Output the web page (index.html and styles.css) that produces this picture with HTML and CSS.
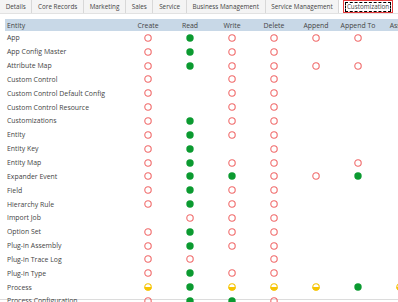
FILE: index.html
```html
<!DOCTYPE html>
<html>
<head>
<meta charset="utf-8">
<link rel="stylesheet" href="styles.css">
</head>
<body>
<div class="frame">
  <div class="tabs">
    <div class="tab">Details</div>
    <div class="tab">Core Records</div>
    <div class="tab">Marketing</div>
    <div class="tab">Sales</div>
    <div class="tab">Service</div>
    <div class="tab">Business Management</div>
    <div class="tab">Service Management</div>
    <div class="tab tab-active"><span class="focus">Customization</span></div>
  </div>
  <div class="grid" id="grid">
    <div class="row head">
      <div class="name">Entity</div>
      <div class="cell">Create</div>
      <div class="cell">Read</div>
      <div class="cell">Write</div>
      <div class="cell">Delete</div>
      <div class="cell">Append</div>
      <div class="cell">Append To</div>
      <div class="cell">Assign</div>
    </div>
  </div>
</div>
<script src="app.js"></script>
</body>
</html>
```
FILE: styles.css
```css
html, body { margin: 0; padding: 0; background: #fff; }
body {
  width: 398px; height: 302px; overflow: hidden;
  font-family: "Open Sans", "Noto Sans", sans-serif;
  font-size: 6.9px; color: #444;
}
.frame { height: 299px; border-bottom: 1px solid #dcdcdc; }
.tabs {
  display: flex; height: 13px; align-items: stretch;
  border-bottom: 1px solid #e2e2e2; background: #fff;
  font-size: 6.3px;
}
.tab {
  display: flex; align-items: center; padding: 0 5.7px;
  background: #f4f4f4; border-right: 1px solid #d8d8d8; color: #444;
  white-space: nowrap;
}
.tab-active {
  margin-left: 4px; padding: 0 1px; background: #fff;
  border: 1px solid #e53b3b; height: 11px; align-self: flex-start;
}
.focus { border: 1px dashed #000; padding: 0 0.5px; line-height: 8px; }
.grid { margin-top: 5px; margin-left: 5px; }
.row { display: grid; grid-template-columns: 122px repeat(7, 42px); height: 13.85px; align-items: center; }
.head { background: #c8d8e7; height: 12px; }
.name { padding-left: 2px; white-space: nowrap; }
.cell { display: flex; justify-content: center; align-items: center; white-space: nowrap; }
.dot { width: 8px; height: 8px; display: block; }
```
FILE: app.js
```js
var rows = [
  ["App","O","G","O","O","O","O",""],
  ["App Config Master","O","G","O","O","","",""],
  ["Attribute Map","O","G","O","O","O","O",""],
  ["Custom Control","O","","O","O","","",""],
  ["Custom Control Default Config","O","","O","O","","",""],
  ["Custom Control Resource","O","","O","O","","",""],
  ["Customizations","O","G","O","O","","",""],
  ["Entity","O","G","O","O","","",""],
  ["Entity Key","O","G","","O","","",""],
  ["Entity Map","O","G","O","O","","O",""],
  ["Expander Event","O","G","G","O","O","G",""],
  ["Field","O","G","O","O","","",""],
  ["Hierarchy Rule","O","G","O","O","","",""],
  ["Import Job","","O","O","O","","",""],
  ["Option Set","O","G","O","O","","",""],
  ["Plug-in Assembly","O","G","O","O","","",""],
  ["Plug-in Trace Log","O","O","","O","","",""],
  ["Plug-in Type","O","G","O","O","","",""],
  ["Process","Y","G","Y","Y","Y","G","Y"],
  ["Process Configuration","O","G","G","O","","",""]
];
var svgs = {
  O: '<svg class="dot" viewBox="0 0 8 8"><circle cx="4" cy="4" r="3.2" fill="none" stroke="#f06a6a" stroke-width="1.1"/></svg>',
  G: '<svg class="dot" viewBox="0 0 8 8"><circle cx="4" cy="4" r="3.7" fill="#0b9a30"/></svg>',
  Y: '<svg class="dot" viewBox="0 0 8 8"><path d="M0.4 4 A3.6 3.6 0 0 0 7.6 4 Z" fill="#f6c400"/><circle cx="4" cy="4" r="3.2" fill="none" stroke="#f6c400" stroke-width="1.1"/></svg>'
};
var grid = document.getElementById("grid");
rows.forEach(function (r) {
  var row = document.createElement("div");
  row.className = "row";
  var n = document.createElement("div");
  n.className = "name";
  n.textContent = r[0];
  row.appendChild(n);
  for (var i = 1; i < r.length; i++) {
    var c = document.createElement("div");
    c.className = "cell";
    if (r[i]) c.innerHTML = svgs[r[i]];
    row.appendChild(c);
  }
  grid.appendChild(row);
});
```
